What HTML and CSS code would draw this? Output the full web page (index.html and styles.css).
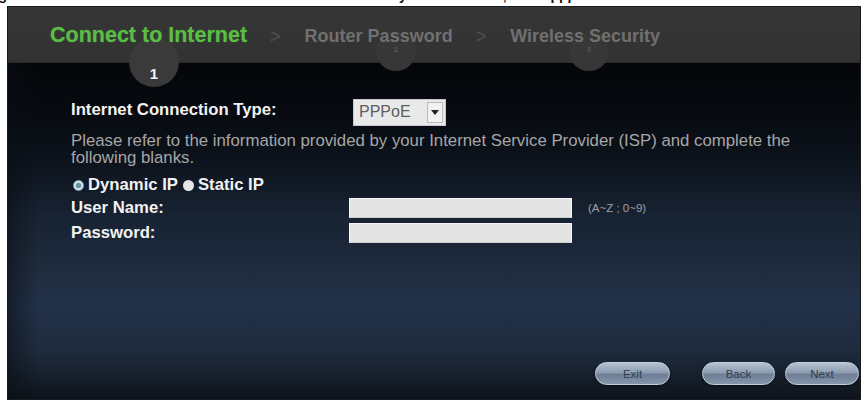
FILE: index.html
```html
<!DOCTYPE html>
<html>
<head>
<meta charset="utf-8">
<link rel="stylesheet" href="styles.css">
</head>
<body>
<div class="caption"><span class="caption-text">Figure 16 Connect to Internet: Dynamic IP, pppoe</span></div>
<div class="panel">
  <div class="header">
    <div class="steps">
      <span class="step step-active">Connect to Internet</span>
      <span class="sep">&gt;</span>
      <span class="step">Router Password</span>
      <span class="sep">&gt;</span>
      <span class="step">Wireless Security</span>
    </div>
    <div class="badge badge-1"><span>1</span></div>
    <div class="badge badge-small badge-2"><span>2</span></div>
    <div class="badge badge-small badge-3"><span>3</span></div>
  </div>
  <div class="body">
    <div class="row row-type">
      <span class="label label-type">Internet Connection Type:</span>
      <div class="select"><span class="select-value">PPPoE</span><span class="select-arrow"><svg width="8" height="5" viewBox="0 0 8 5"><path d="M0 0 H8 L4 5 Z" fill="#222"/></svg></span></div>
    </div>
    <p class="desc">Please refer to the information provided by your Internet Service Provider (ISP) and complete the following blanks.</p>
    <div class="row row-radio">
      <span class="radio radio-on"></span><span class="label">Dynamic IP</span>
      <span class="radio radio-off"></span><span class="label">Static IP</span>
    </div>
    <div class="row row-field">
      <span class="label label-field">User Name:</span>
      <span class="input"></span>
      <span class="hint">(A~Z ; 0~9)</span>
    </div>
    <div class="row row-field row-pass">
      <span class="label label-field">Password:</span>
      <span class="input"></span>
    </div>
    <div class="actions">
      <span class="btn btn-exit">Exit</span>
      <span class="btn btn-back">Back</span>
      <span class="btn btn-next">Next</span>
    </div>
  </div>
</div>
</body>
</html>
```

FILE: styles.css
```css
html, body {
  margin: 0;
  padding: 0;
  background: #ffffff;
  font-family: "Liberation Sans", Arial, sans-serif;
}

.caption {
  height: 6px;
  overflow: hidden;
}

.caption-text {
  display: block;
  margin-top: -13px;
  margin-left: -14px;
  font-size: 14px;
  line-height: 16px;
  font-weight: bold;
  color: #111;
  word-spacing: 40px;
  white-space: nowrap;
}

.panel {
  margin-left: 7px;
  width: 854px;
  height: 394px;
  display: flex;
  flex-direction: column;
  border: 1px solid #1a1c20;
  box-sizing: border-box;
  overflow: hidden;
}

.header {
  position: relative;
  height: 56px;
  flex: none;
  background: linear-gradient(to bottom, #363636 0%, #323232 100%);
  border-bottom: 1px solid #2a2a2a;
  box-sizing: border-box;
}

.steps {
  position: relative;
  z-index: 2;
  display: flex;
  align-items: baseline;
  padding: 16px 0 0 42px;
  white-space: nowrap;
}

.step {
  font-weight: bold;
  font-size: 18px;
  color: #707070;
}

.step-active {
  font-size: 21.5px;
  color: #5cbf45;
  text-shadow: 0 0 2px rgba(92, 191, 69, 0.35);
}

.sep {
  font-size: 18px;
  color: #505050;
  margin: 0 24px 0 23px;
  transform: scaleY(1.1);
}

.badge {
  position: absolute;
  z-index: 1;
  width: 50px;
  height: 50px;
  border-radius: 50%;
  background: #3a3a3a;
  left: 121px;
  top: 30px;
  display: flex;
  justify-content: center;
}

.badge span {
  margin-top: 30px;
  font-size: 15px;
  font-weight: bold;
  color: #f4f4f4;
  line-height: 14px;
}

.badge-small {
  width: 40px;
  height: 40px;
  background: #373737;
}

.badge-small span {
  margin-top: 15px;
  font-size: 8px;
  line-height: 8px;
  color: #555;
}

.badge-2 {
  left: 368px;
  top: 24px;
}

.badge-3 {
  left: 561px;
  top: 24px;
}

.body {
  flex: 1;
  display: flex;
  flex-direction: column;
  padding: 35px 1px 14px 63px;
  background:
    linear-gradient(to right, rgba(10, 14, 20, 0.55) 0px, rgba(10, 14, 20, 0) 30px),
    linear-gradient(to bottom, #04060a 0%, #06090e 12%, #0c121b 28%, #172232 45%, #1f2c3e 62%, #22314a 72%, #1e2b3d 86%, #121a25 96%, #0d131b 100%);
}

.row {
  display: flex;
  align-items: center;
}

.label {
  font-weight: bold;
  font-size: 16.7px;
  color: #f2f2f2;
  white-space: nowrap;
}

.row-type {
  height: 28px;
}

.label-type {
  width: 282px;
  flex: none;
  margin-top: -4px;
}

.select {
  width: 93px;
  height: 27px;
  box-sizing: border-box;
  display: flex;
  align-items: center;
  background: #e9e9e9;
  border: 1px solid #c8c8c8;
}

.select-value {
  flex: 1;
  padding-left: 5px;
  font-size: 16px;
  color: #5e5e5e;
}

.select-arrow {
  width: 16px;
  height: 21px;
  margin-right: 2px;
  background: #f2f2f2;
  border: 1px solid #bbb;
  box-sizing: border-box;
  display: flex;
  align-items: center;
  justify-content: center;
}

.desc {
  margin: 6px 0 0 0;
  width: 740px;
  font-size: 16.8px;
  line-height: 17px;
  color: #a6a6a6;
}

.row-radio {
  margin-top: 9px;
  height: 20px;
}

.radio {
  width: 11px;
  height: 11px;
  border-radius: 50%;
  box-sizing: border-box;
  flex: none;
  margin-left: 2px;
  margin-right: 4px;
}

.radio-on {
  background: radial-gradient(circle, #6a8fa0 0 2.5px, #cfe4ea 3px 100%);
  border: 1px solid #8fb3bf;
}

.radio-off {
  background: #e6e6e6;
  margin-left: 5px;
}

.row-field {
  margin-top: 3px;
  height: 20px;
}

.row-pass {
  margin-top: 5px;
}

.label-field {
  width: 278px;
  flex: none;
}

.input {
  width: 223px;
  height: 20px;
  box-sizing: border-box;
  background: #e4e4e4;
  border: 1px solid #f6f6f6;
  border-bottom-color: #cfcfcf;
}

.hint {
  margin-left: 16px;
  font-size: 11.5px;
  color: #a0a0a0;
}

.actions {
  margin-top: auto;
  display: flex;
  justify-content: flex-end;
}

.btn {
  height: 23px;
  box-sizing: border-box;
  border-radius: 12px;
  display: flex;
  align-items: center;
  justify-content: center;
  font-size: 11.5px;
  color: #2f3d52;
  background: linear-gradient(to bottom, #b4c2d2 0%, #8e9db0 45%, #6e7f95 55%, #8596ab 100%);
  border: 1px solid #c6d0dc;
  box-shadow: 0 1px 2px rgba(0, 0, 0, 0.5);
}

.btn-exit {
  width: 75px;
}

.btn-back {
  width: 73px;
  margin-left: 32px;
}

.btn-next {
  width: 74px;
  margin-left: 10px;
}
```
